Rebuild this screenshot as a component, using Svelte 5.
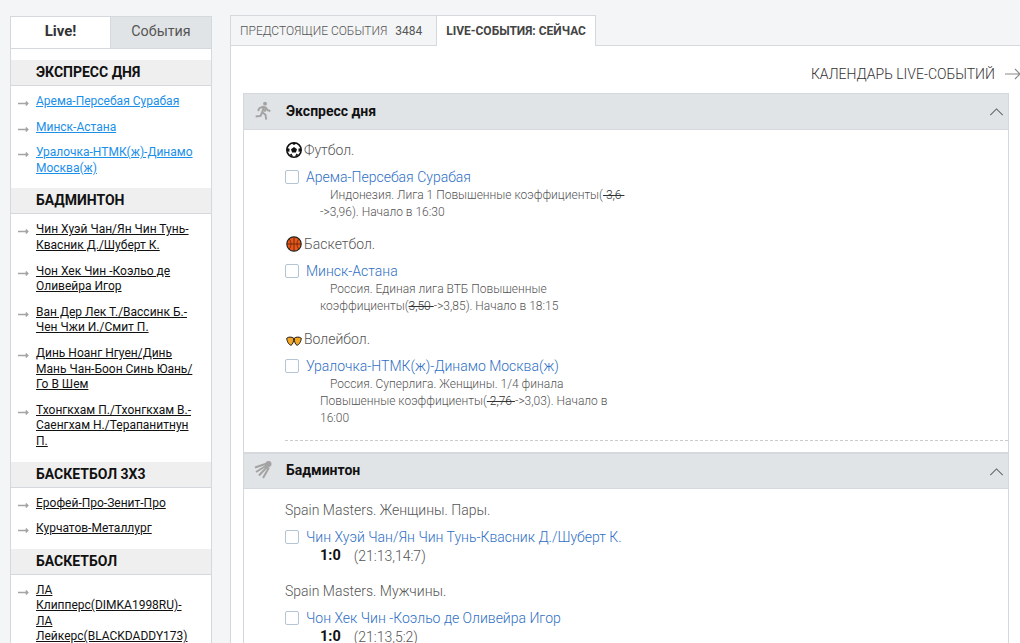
<script>
  const sidebar = [
    { title: 'Экспресс дня', blue: true, items: ['Арема-Персебая Сурабая', 'Минск-Астана', 'Уралочка-НТМК(ж)-Динамо Москва(ж)'] },
    { title: 'Бадминтон', items: ['Чин Хуэй Чан/Ян Чин Тунь-Квасник Д./Шуберт К.', 'Чон Хек Чин -Коэльо де Оливейра Игор', 'Ван Дер Лек Т./Вассинк Б.-Чен Чжи И./Смит П.', 'Динь Ноанг Нгуен/Динь Мань Чан-Боон Синь Юань/Го В Шем', 'Тхонгкхам П./Тхонгкхам В.-Саенгхам Н./Терапанитнун П.'] },
    { title: 'Баскетбол 3х3', items: ['Ерофей-Про-Зенит-Про', 'Курчатов-Металлург'] },
    { title: 'Баскетбол', items: ['ЛА Клипперс(DIMKA1998RU)-ЛА Лейкерс(BLACKDADDY173)'] }
  ];

  const games = [
    { group: 'Spain Masters. Женщины. Пары.', name: 'Чин Хуэй Чан/Ян Чин Тунь-Квасник Д./Шуберт К.', score: '1:0', sets: '(21:13,14:7)' },
    { group: 'Spain Masters. Мужчины.', name: 'Чон Хек Чин -Коэльо де Оливейра Игор', score: '1:0', sets: '(21:13,5:2)' }
  ];
</script>

{#snippet chevron()}
  <svg class="chevron" viewBox="0 0 16 9" width="15" height="8"><path d="M1 8 8 1l7 7" fill="none" stroke="#666" stroke-width="1.2"/></svg>
{/snippet}

<div class="page">
  <aside class="side">
    <div class="side-tabs">
      <div class="side-tab active">Live!</div>
      <div class="side-tab">События</div>
    </div>
    {#each sidebar as block}
      <h3>{block.title}</h3>
      <ul>
        {#each block.items as item}
          <li>
            <svg class="mini-arrow" viewBox="0 0 11 7" width="11" height="7"><path d="M0 3.500h9.500M7.800 1.500l2 2-2 2" fill="none" stroke="#a5a5a5" stroke-width="1.500"/></svg>
            <a href="#top" class:blue={block.blue}>{item}</a>
          </li>
        {/each}
      </ul>
    {/each}
  </aside>

  <main>
    <div class="tabs">
      <div class="tab">Предстоящие события <span class="count">3484</span></div>
      <div class="tab active">Live-события: сейчас</div>
    </div>
    <div class="panel">
      <div class="calendar">
        <span>Календарь Live-событий</span>
        <svg viewBox="0 0 16 12" width="16" height="12"><path d="M0 6h15M10 1l5 5-5 5" fill="none" stroke="#888" stroke-width="1.200"/></svg>
      </div>

      <section>
        <header>
          <svg class="sport" viewBox="0 0 22 24" width="18" height="20">
            <circle cx="13.500" cy="3" r="2.400" fill="#a3a3a3"/>
            <path d="M6.500 8.500 11 6.800l3.500 1 2 3.200 3.500 1M12 7.500l-2 6 4 3 1 6M9.800 14l-1.800 4-6 .6M14.500 8l-1.600 5M6.500 8.500 5 12" fill="none" stroke="#a3a3a3" stroke-width="2.400"/>
          </svg>
          <h2>Экспресс дня</h2>
          {@render chevron()}
        </header>
        <div class="body first">
          <div class="league">
            <svg viewBox="0 0 16 16" width="16" height="16">
              <circle cx="8" cy="8" r="7.200" fill="#fff" stroke="#111" stroke-width="1.600"/>
              <path d="m8 5 3 2.200-1.100 3.400H6.100L5 7.200z" fill="#111"/>
              <path d="M5.500 1.500 8 3l2.500-1.500-2.500-1zM1 6l2.600.8L3.300 10 1 9zM15 6l-2.600.8.300 3.200L15 9zM3.500 13l2-1.500 1.500 3zM12.500 13l-2-1.500-1.500 3z" fill="#111"/>
            </svg>
            <span>Футбол.</span>
          </div>
          <div class="event">
            <span class="check"></span>
            <a href="#top">Арема-Персебая Сурабая</a>
          </div>
          <p class="desc">Индонезия. Лига 1 Повышенные коэффициенты(<s>&nbsp;3,6&nbsp;</s><wbr><span class="nb">-&gt;3,96).</span> Начало в 16:30</p>

          <div class="league">
            <svg viewBox="0 0 16 16" width="16" height="16">
              <circle cx="8" cy="8" r="7.200" fill="#e8581a" stroke="#222" stroke-width="1.200"/>
              <path d="M8 1v14M1 8h14M3.200 3c2.400 2.800 2.400 7.200 0 10M12.800 3c-2.400 2.800-2.400 7.200 0 10" fill="none" stroke="#6b2508" stroke-width=".9"/>
            </svg>
            <span>Баскетбол.</span>
          </div>
          <div class="event">
            <span class="check"></span>
            <a href="#top">Минск-Астана</a>
          </div>
          <p class="desc">Россия. Единая лига ВТБ Повышенные коэффициенты(<s>3,50&nbsp;</s>-&gt;3,85). Начало в 18:15</p>

          <div class="league">
            <svg class="vball" viewBox="0 0 16 10" width="16" height="10">
              <path d="M7.700 2.200C6 .8 2.500.6.700 2.300c.2 3 2.200 6.700 4.300 7 1.700-.8 2.800-3.600 2.700-7.100zM8.300 2.200C10 .8 13.500.6 15.300 2.300c-.2 3-2.200 6.700-4.300 7-1.700-.8-2.800-3.600-2.700-7.100z" fill="#f5a623" stroke="#1a1a1a" stroke-width="1"/>
            </svg>
            <span>Волейбол.</span>
          </div>
          <div class="event">
            <span class="check"></span>
            <a href="#top">Уралочка-НТМК(ж)-Динамо Москва(ж)</a>
          </div>
          <p class="desc">Россия. Суперлига. Женщины. 1/4 финала Повышенные коэффициенты(<s>&nbsp;2,76&nbsp;</s>-&gt;3,03). Начало в 16:00</p>
          <div class="dash"></div>
        </div>
      </section>

      <section>
        <header class="thick">
          <svg class="sport" viewBox="0 0 19 19" width="19" height="19">
            <circle cx="14.500" cy="3" r="3" fill="#a3a3a3"/>
            <path d="M12 2.800 1 6.500M12.500 4.500 2 11M13.500 5.500 5 14.500M15 6.500 9 17" fill="none" stroke="#a3a3a3" stroke-width="2"/>
          </svg>
          <h2>Бадминтон</h2>
          {@render chevron()}
        </header>
        <div class="body">
          {#each games as game}
            <div class="group">{game.group}</div>
            <div class="event">
              <span class="check"></span>
              <a href="#top">{game.name}</a>
            </div>
            <div class="score"><b>{game.score}</b><span>{game.sets}</span></div>
          {/each}
        </div>
      </section>
    </div>
  </main>
</div>

<style>
  :global(body) {
    background: #f4f5f7;
    font-family: Roboto, "Liberation Sans", sans-serif;
    color: #666;
  }

  .page {
    display: flex;
    align-items: flex-start;
    gap: 18px;
    height: 643px;
    overflow: hidden;
    padding: 16px 0 0 10px;
    box-sizing: border-box;
  }

  .side {
    flex: 0 0 201px;
    box-sizing: border-box;
    background: #fff;
    border: 1px solid #d5d9dd;
    border-bottom: 0;
  }

  .side-tabs {
    display: flex;
    margin-bottom: 11px;
  }

  .side-tab {
    width: 100px;
    height: 32px;
    box-sizing: border-box;
    line-height: 29px;
    text-align: center;
    font-size: 14.3px;
    color: #555;
    background: #e1e4e7;
    border-bottom: 1px solid #d5d9dd;
  }

  .side-tab.active {
    font-size: 15px;
    font-weight: bold;
    color: #333;
    background: #fff;
    border-right: 1px solid #d5d9dd;
  }

  h3 {
    margin: 0;
    height: 26px;
    box-sizing: border-box;
    padding-left: 25px;
    line-height: 25px;
    font-size: 14px;
    font-weight: bold;
    text-transform: uppercase;
    color: #111;
    background: #efefef;
    border-bottom: 1px solid #d5d9dd;
  }

  ul {
    list-style: none;
    margin: 0;
    padding: 8px 18px 2px 25px;
  }

  li {
    position: relative;
    margin-bottom: 10px;
    font-size: 12px;
    line-height: 15.6px;
  }

  .mini-arrow {
    position: absolute;
    left: -18px;
    top: 6px;
  }

  li a {
    color: #111;
    text-decoration: underline;
  }

  li a.blue {
    color: #1c8fe8;
  }

  main {
    flex: 1;
    min-width: 0;
  }

  .tabs {
    display: flex;
    height: 30px;
    margin-top: -1px;
    border-bottom: 1px solid #d5d9dd;
    box-sizing: content-box;
  }

  .tab {
    box-sizing: border-box;
    height: 31px;
    line-height: 30px;
    padding: 0 14px 0 9px;
    font-size: 12px;
    font-weight: 300;
    text-transform: uppercase;
    color: #555;
    border: 1px solid #d5d9dd;
    border-right: 0;
    border-bottom: 0;
  }

  .count {
    margin-left: 5px;
    font-weight: 400;
    color: #555;
  }

  .tab.active {
    padding: 0 9px;
    font-weight: bold;
    color: #444;
    background: #fff;
    border-right: 1px solid #d5d9dd;
  }

  .panel {
    background: #fff;
    border-left: 1px solid #d5d9dd;
    padding: 0 11px 0 12px;
    height: 600px;
  }

  .calendar {
    display: flex;
    justify-content: flex-end;
    align-items: center;
    gap: 10px;
    height: 47px;
    padding-top: 8px;
    margin-right: -12px;
    box-sizing: border-box;
    font-size: 14px;
    font-weight: 300;
    text-transform: uppercase;
    color: #333;
  }

  section {
    border-left: 1px solid #d5d9dd;
    border-right: 1px solid #d5d9dd;
  }

  header {
    display: flex;
    align-items: center;
    position: relative;
    height: 37px;
    box-sizing: border-box;
    padding: 0 0 2px 42px;
    background: #e1e4e7;
    border-top: 1px solid #d5d9dd;
    border-bottom: 1px solid #d5d9dd;
  }

  header.thick {
    border-top-width: 2px;
  }

  h2 {
    margin: 0;
    font-size: 14px;
    font-weight: bold;
    color: #111;
  }

  .sport {
    position: absolute;
    left: 10px;
    top: 7px;
  }

  .chevron {
    position: absolute;
    right: 4px;
    top: 14px;
  }

  .body {
    padding: 1px 0 0 41px;
    font-size: 14px;
    font-weight: 300;
  }

  .body.first {
    padding-top: 12px;
  }

  .league {
    display: flex;
    align-items: center;
    gap: 2px;
    height: 16px;
    margin-left: 1px;
    color: #555;
  }

  .vball {
    margin-top: 4px;
  }

  .event {
    display: flex;
    align-items: center;
    gap: 7px;
    margin-top: 10px;
    height: 18px;
    white-space: nowrap;
  }

  .event a {
    color: #2f6fc4;
    text-decoration: none;
  }

  .check {
    flex: none;
    width: 14px;
    height: 14px;
    box-sizing: border-box;
    border: 1px solid #b4c6d6;
    border-radius: 2px;
    background: #fff;
  }

  .desc {
    width: 310px;
    margin: 1px 0 15.25px 35px;
    font-size: 12px;
    line-height: 17px;
    text-indent: 10px;
    color: #555;
  }

  .desc s {
    color: #333;
  }

  .nb {
    white-space: nowrap;
  }

  .dash {
    margin: -2.25px 0 0 0;
    border-top: 1px dashed #ccc;
    height: 11px;
  }

  .group {
    margin-top: 12px;
    height: 16px;
    line-height: 16px;
    color: #555;
  }

  .score {
    display: flex;
    align-items: center;
    gap: 13px;
    height: 18px;
    margin-top: 1px;
    padding-left: 35px;
    margin-bottom: 18px;
    color: #555;
  }

  .score b {
    font-size: 14.5px;
    font-weight: bold;
    color: #111;
  }
</style>
